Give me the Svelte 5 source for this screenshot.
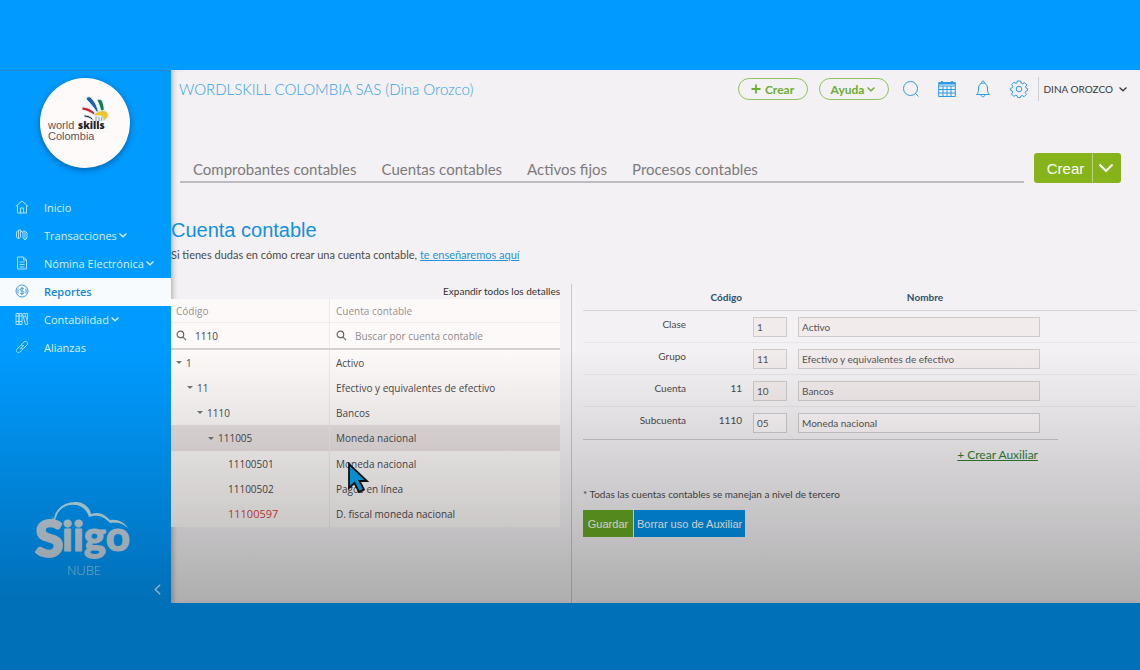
<script lang="ts">
    const menu = [
        { label: 'Inicio', icon: 'home', arrow: false },
        { label: 'Transacciones', icon: 'swap', arrow: true },
        { label: 'Nómina Electrónica', icon: 'doc', arrow: true },
        { label: 'Reportes', icon: 'money', arrow: false },
        { label: 'Contabilidad', icon: 'books', arrow: true },
        { label: 'Alianzas', icon: 'link', arrow: false }
    ];
    let activeMenu = $state('Reportes');

    const tabs = ['Comprobantes contables', 'Cuentas contables', 'Activos fijos', 'Procesos contables'];

    const accounts = [
        { code: '1', name: 'Activo', level: 0, leaf: false },
        { code: '11', name: 'Efectivo y equivalentes de efectivo', level: 1, leaf: false },
        { code: '1110', name: 'Bancos', level: 2, leaf: false },
        { code: '111005', name: 'Moneda nacional', level: 3, leaf: false },
        { code: '11100501', name: 'Moneda nacional', level: 4, leaf: true },
        { code: '11100502', name: 'Pagos en línea', level: 4, leaf: true },
        { code: '11100597', name: 'D. fiscal moneda nacional', level: 4, leaf: true, fiscal: true }
    ];
    let selected = $state('111005');
    let codeFilter = $state('1110');
    let nameFilter = $state('');

    const fields = $state([
        { id: 'clase', label: 'Clase', prefix: '', code: '1', name: 'Activo', locked: true },
        { id: 'grupo', label: 'Grupo', prefix: '', code: '11', name: 'Efectivo y equivalentes de efectivo', locked: true },
        { id: 'cuenta', label: 'Cuenta', prefix: '11', code: '10', name: 'Bancos', locked: true },
        { id: 'subcuenta', label: 'Subcuenta', prefix: '1110', code: '05', name: 'Moneda nacional', locked: false }
    ]);
</script>

{#snippet chevron()}
    <svg class="chevron" viewBox="0 0 10 8"><path d="M1.5 2.5 5 5.8 8.5 2.5" /></svg>
{/snippet}

{#snippet lens()}
    <svg class="lens" viewBox="0 0 12 12"><circle cx="4.8" cy="4.8" r="3.6" /><path d="M7.5 7.5 11 11" /></svg>
{/snippet}

<div class="page">
    <div class="app">
        <aside class="sidebar">
            <div class="brand">
                <svg viewBox="0 0 90 90" role="img" aria-label="worldskills Colombia">
                    <path d="M46 21c1-3 5-3 6 0 4 4 6 9 7 17-4-7-7-11-13-17z" fill="#1d5fa8" />
                    <path d="M57 22c2-2 6 0 6 3 2 5 1 10-1 15-1-7-2-12-5-18z" fill="#1b7f4d" />
                    <path d="M42 29c7 0 13 4 16 11-5-4-9-7-16-8z" fill="#d3222a" />
                    <path d="M54 36c5-4 13-5 14 0 1 3-2 6-6 7 3-4 0-6-8-5z" fill="#efc534" />
                    <path d="M44 37c5 0 8 2 10 6-3-2-6-4-10-4z" fill="#231f20" />
                    <path d="M56 39v4M59 39v4M62 39l-1 4" stroke="#7497b5" />
                    <text x="8" y="51" class="world">world</text>
                    <text x="38" y="51" class="skills">skills</text>
                    <text x="8" y="62" class="colombia">Colombia</text>
                </svg>
            </div>
            <nav>
                {#each menu as item}
                    <a href="#{item.icon}" class:active={activeMenu === item.label} onclick={() => (activeMenu = item.label)}>
                        <svg class="menu-icon" viewBox="0 0 14 14">
                            {#if item.icon === 'home'}
                                <path d="M.8 6.500 7 1l6.200 5.500M2.500 5.500V13h9V5.500M5.500 13V8h3v5" />
                            {:else if item.icon === 'swap'}
                                <path d="M3.500 11V2L1.500 4M3.500 2h2v7l-2 2-2-2V4M8 3h2l2 2v5l-2 2-2-2zM10 3v9M6 3l2 2" />
                            {:else if item.icon === 'doc'}
                                <path d="M2.500 1h6l3 3v9h-9zM8.500 1v3h3M4.500 6h5M4.500 8.500h5M4.500 11h5" />
                            {:else if item.icon === 'money'}
                                <circle cx="7" cy="7" r="6" />
                                <path d="M9 5c-.5-1-3.800-1.200-3.800.5S9 6.800 9 8.600 5.500 10.200 5 9M7 3v8M3 4.500v5M11 4.500v5" />
                            {:else if item.icon === 'books'}
                                <path d="M1 1.500h3v11H1zM4 1.500h3v11H4zM7.500 2l2.500-.5 3 10.500-2.500.6zM1 9.500h6M1 4h6M8 5l3-.8M10.500 1.500h2v6" />
                            {:else}
                                <path d="m5 9 4-4M6 5l3-3c2-2 5 1 3 3L9 8c-.8.800-2 .8-2.800.2M8 9l-3 3c-2 2-5-1-3-3l3-3c.8-.8 2-.8 2.800-.2" />
                            {/if}
                        </svg>
                        <span>{item.label}</span>
                        {#if item.arrow}{@render chevron()}{/if}
                    </a>
                {/each}
            </nav>
            <div class="siigo">
                <svg viewBox="0 0 98 80" role="img" aria-label="Siigo Nube">
                    <path d="M19 20C21 1 52-4 56 15c9-3 14 1 19 6 8-1 14 2 18 8-6-5-10-6-18-5-6-6-11-9-21-6C49 0 24 3 21 19l-2 3-3-5z" />
                    <text x="0" y="58" class="big-s">S</text>
                    <text x="27" y="52" class="iigo">iigo</text>
                    <text x="49" y="76" class="nube">NUBE</text>
                </svg>
            </div>
            <button class="collapse" aria-label="Contraer menú">
                <svg viewBox="0 0 8 14"><path d="M7 1.500 1.500 7 7 12.500" /></svg>
            </button>
        </aside>

        <main>
            <header class="topbar">
                <span class="company">WORDLSKILL COLOMBIA SAS (Dina Orozco)</span>
                <div class="actions">
                    <button class="pill">
                        <svg class="plus" viewBox="0 0 10 10"><path d="M5 .5v9M.5 5h9" /></svg>
                        Crear
                    </button>
                    <button class="pill">Ayuda {@render chevron()}</button>
                </div>
                <div class="tools">
                    <button aria-label="Buscar">
                        <svg viewBox="0 0 18 18"><circle cx="8.500" cy="8.500" r="7" /><path d="m13.500 13.500 3 3" /></svg>
                    </button>
                    <button aria-label="Calendario">
                        <svg viewBox="0 0 18 18"><path d="M.7 2.500h16.600v14H.7zM.7 6h16.600M.7 9.500h16.600M.7 13h16.600M5 6v10.500M9 6v10.500M13 6v10.500" /><path d="M4 1v2.500M14 1v2.500M1 3.500h16" stroke-width="1.800" /></svg>
                    </button>
                    <button aria-label="Notificaciones">
                        <svg viewBox="0 0 18 18"><path d="M2.500 14.500c2-1.500 2-3.500 2-6.500 0-3 2-5 4.500-5s4.500 2 4.500 5c0 3 0 5 2 6.500zM7.500 3c0-2.500 3-2.500 3 0M7 14.500c0 3 4 3 4 0" /></svg>
                    </button>
                    <button aria-label="Configuración">
                        <svg viewBox="0 0 18 18">
                            <path d="M7.300 1h3.400l.5 2.200 1.300.6 2-1.200 2.300 2.300-1.200 2 .5 1.300 1.500.4v1.900l-1.900.7-.5 1.200 1.200 2-2.300 2.300-2-1.200-1.200.5-.6 1.500H7.600L7 15.700l-1.200-.5-2 1.200-2.300-2.300 1.200-2-.5-1.200-1.500-.4V8.300l1.700-.5.500-1.300-1.200-2L4 2.200l2 1.200.8-.3z" />
                            <circle cx="9" cy="9" r="2.800" />
                        </svg>
                    </button>
                </div>
                <button class="user">DINA OROZCO {@render chevron()}</button>
            </header>

            <div class="tabbar">
                <nav class="tabs">
                    {#each tabs as tab}
                        <a href="#tab">{tab}</a>
                    {/each}
                </nav>
                <div class="split">
                    <button>Crear</button>
                    <button class="more" aria-label="Más opciones">
                        <svg viewBox="0 0 16 10"><path d="m1.500 1.500 6.500 6.500 6.500-6.500" /></svg>
                    </button>
                </div>
            </div>

            <h1>Cuenta contable</h1>
            <p class="help">Si tienes dudas en cómo crear una cuenta contable, <a href="#ayuda">te enseñaremos aquí</a></p>

            <div class="columns">
                <section class="tree">
                    <button class="expand">Expandir todos los detalles</button>
                    <table>
                        <thead>
                            <tr>
                                <th class="code">Código</th>
                                <th>Cuenta contable</th>
                            </tr>
                            <tr class="search">
                                <td>
                                    <label>{@render lens()}<input aria-label="Buscar por código" bind:value={codeFilter} /></label>
                                </td>
                                <td>
                                    <label>{@render lens()}<input aria-label="Buscar por cuenta contable" placeholder="Buscar por cuenta contable" bind:value={nameFilter} /></label>
                                </td>
                            </tr>
                        </thead>
                        <tbody>
                            {#each accounts as account}
                                <tr class:selected={selected === account.code} onclick={() => (selected = account.code)}>
                                    <td>
                                        <div class="node level-{account.level}">
                                            <span class="caret" class:leaf={account.leaf}></span>
                                            <span class:fiscal={account.fiscal}>{account.code}</span>
                                        </div>
                                    </td>
                                    <td>{account.name}</td>
                                </tr>
                            {/each}
                        </tbody>
                    </table>
                </section>

                <form class="detail" onsubmit={(e) => e.preventDefault()}>
                    <div class="row head">
                        <span class="head-code">Código</span>
                        <span class="head-name">Nombre</span>
                    </div>
                    {#each fields as field}
                        <div class="row">
                            <label for={field.id}>{field.label}</label>
                            <span class="prefix">{field.prefix}</span>
                            <input id={field.id} bind:value={field.code} readonly={field.locked} />
                            <input aria-label="Nombre {field.label}" bind:value={field.name} readonly={field.locked} />
                        </div>
                    {/each}
                    <div class="aux"><a href="#auxiliar">+ Crear Auxiliar</a></div>
                    <p class="note">* Todas las cuentas contables se manejan a nivel de tercero</p>
                    <div class="buttons">
                        <button class="save">Guardar</button>
                        <button type="button" class="clear">Borrar uso de Auxiliar</button>
                    </div>
                </form>
            </div>
        </main>
    </div>

    <svg class="pointer" viewBox="0 0 22 32">
        <path d="M2 2v24l5.500-5 4.500 9 5-2.500-4.500-8.500H20z" />
    </svg>
</div>

<style>
    :global(body) {
        margin: 0;
    }

    .page {
        position: relative;
        display: flex;
        box-sizing: border-box;
        min-height: 100vh;
        padding: 70px 0 67px;
        background: #009bff;
        color: #4c4a4b;
        font-family: Lato, "Open Sans", sans-serif;
        font-size: 11px;
    }

    /* shade that darkens the lower part of the screen */
    .page::after {
        content: '';
        position: absolute;
        inset: 0;
        background: linear-gradient(transparent 350px, rgba(0, 0, 0, 0.28) 600px);
        pointer-events: none;
    }

    .app {
        display: flex;
        flex: 1;
        min-width: 0;
    }

    button {
        padding: 0;
        border: none;
        background: none;
        font: inherit;
        color: inherit;
        cursor: pointer;
    }

    svg {
        display: block;
        fill: none;
        stroke: currentColor;
    }

    text {
        stroke: none;
    }

    .chevron {
        width: 10px;
        height: 8px;
        stroke-width: 1.3;
    }

    .sidebar {
        display: flex;
        flex-direction: column;
        box-sizing: border-box;
        width: 171px;
        flex-shrink: 0;
        border-top: 1px solid #1f88cf;
        color: #d5f0fb;
        font-family: "Open Sans", sans-serif;
    }

    .brand {
        width: 90px;
        height: 90px;
        margin: 7px auto 26px 40px;
        border-radius: 50%;
        background: #fffafa;
        box-shadow: 0 2px 6px rgba(0, 40, 90, 0.5);
    }

    .world,
    .skills,
    .colombia {
        font-family: "Liberation Sans", sans-serif;
        font-size: 11px;
        fill: #5d5659;
    }

    .skills {
        font-family: "Open Sans", sans-serif;
        font-size: 10px;
        font-weight: 800;
        fill: #231f20;
    }

    .sidebar nav a {
        display: flex;
        align-items: center;
        box-sizing: border-box;
        height: 28px;
        padding: 0 0 2px 15px;
        color: inherit;
        text-decoration: none;
    }

    .sidebar nav a.active {
        background: #f7fbfd;
        color: #1088d8;
        font-weight: 600;
    }

    .menu-icon {
        width: 14px;
        height: 14px;
        margin-right: 15px;
        opacity: 0.8;
    }

    .sidebar .chevron {
        margin-left: 1px;
    }

    .siigo {
        width: 98px;
        margin: auto auto 0 35px;
        color: #c9d8e3;
    }

    .siigo path {
        fill: #bfe6ee;
        stroke: none;
    }

    .siigo text {
        font-family: Lato, sans-serif;
        font-weight: 900;
        fill: currentColor;
        stroke: currentColor;
        stroke-linejoin: round;
    }

    .siigo .big-s {
        font-size: 52px;
        stroke-width: 2;
    }

    .siigo .iigo {
        font-size: 42px;
    }

    .siigo .nube {
        font-family: "Open Sans", sans-serif;
        font-size: 13px;
        font-weight: 300;
        fill: #a5dcec;
        stroke: none;
        text-anchor: middle;
    }

    .collapse {
        align-self: flex-end;
        margin: 4px 10px 7px 0;
    }

    .collapse svg {
        width: 7px;
        height: 13px;
        stroke-width: 1.6;
    }

    main {
        display: flex;
        flex: 1;
        flex-direction: column;
        min-width: 0;
        background: #f3f1f3;
        box-shadow: inset 5px 0 5px -3px rgba(0, 0, 0, 0.25);
    }

    .topbar {
        display: flex;
        align-items: center;
        height: 38px;
        padding: 0 12px 0 8px;
    }

    .company {
        flex: 1;
        color: #35a3e6;
        font-size: 15px;
        font-weight: 300;
        line-height: 36px;
        white-space: nowrap;
    }

    .actions,
    .tools {
        display: flex;
        align-items: center;
    }

    .actions {
        gap: 11px;
    }

    .pill {
        display: flex;
        align-items: center;
        justify-content: center;
        gap: 4px;
        box-sizing: border-box;
        width: 70px;
        height: 22px;
        border: 1px solid #8fc35f;
        border-radius: 11px;
        color: #6cad33;
        font-size: 12px;
        font-weight: 700;
    }

    .pill .chevron {
        margin-left: -2px;
    }

    .plus {
        width: 10px;
        height: 10px;
        stroke-width: 1.8;
    }

    .tools {
        gap: 18px;
        margin: 0 10px 0 13px;
        color: #2e9ae6;
    }

    .tools svg {
        width: 18px;
        height: 18px;
    }

    .user {
        display: flex;
        align-items: center;
        gap: 5px;
        height: 24px;
        padding-left: 5px;
        border-left: 1px solid #cfcdd0;
        color: #3a3a3c;
        font-size: 10px;
        white-space: nowrap;
    }

    .tabbar {
        display: flex;
        align-items: flex-end;
        gap: 10px;
        margin-top: 45px;
        padding: 0 19px 0 9px;
    }

    .tabs {
        display: flex;
        flex: 1;
        gap: 25px;
        height: 28px;
        padding-left: 13px;
        border-bottom: 2px solid #bdbbbd;
    }

    .tabs a {
        color: #7d7b7d;
        font-size: 15px;
        line-height: 32px;
        text-decoration: none;
        white-space: nowrap;
    }

    .split {
        display: flex;
        height: 30px;
        border-radius: 3px;
        background: #86b31a;
        color: #fff;
        font-family: "Liberation Sans", sans-serif;
        font-size: 15px;
    }

    .split button {
        width: 58px;
        padding-left: 5px;
    }

    .split .more {
        width: 29px;
        border-left: 1px solid #bcd47c;
    }

    .split svg {
        width: 16px;
        height: 10px;
        stroke-width: 2;
    }

    h1 {
        margin: 35px 0 0;
        color: #1490df;
        font-family: "Liberation Sans", sans-serif;
        font-size: 20px;
        font-weight: 400;
        line-height: 24px;
    }

    .help {
        margin: 5px 0 0;
        line-height: 16px;
    }

    .help a {
        color: #2593e0;
    }

    .columns {
        display: flex;
        flex: 1;
        margin-top: 21px;
    }

    .tree {
        flex: 0 1 401px;
        box-sizing: border-box;
        padding-right: 11px;
        border-right: 1px solid #c9c7c9;
    }

    .expand {
        display: block;
        height: 15px;
        margin-left: auto;
        padding-bottom: 2px;
        color: #333;
        font-size: 10px;
        line-height: 12px;
    }

    table {
        width: 100%;
        border-collapse: collapse;
        table-layout: fixed;
        background: #fdf9f9;
        font-family: "Open Sans", "Noto Sans", sans-serif;
        font-size: 10px;
    }

    th,
    td {
        height: 25px;
        padding: 0 6px;
        text-align: left;
        font-weight: 400;
        line-height: 16px;
    }

    th {
        height: 23px;
        color: #969294;
    }

    th.code {
        width: 147px;
    }

    tr > :first-child {
        border-right: 1px solid #eeeaeb;
        padding-left: 5px;
    }

    .search td {
        border-top: 1px solid #f0ebec;
        border-bottom: 2px solid #d5d1d2;
    }

    .search label {
        display: flex;
        align-items: center;
        gap: 8px;
    }

    .lens {
        width: 11px;
        height: 11px;
        flex-shrink: 0;
        color: #666;
        stroke-width: 1.3;
    }

    .search input {
        flex: 1;
        min-width: 0;
        height: 18px;
        padding: 0;
        border: none;
        background: none;
        color: #444;
        font: inherit;
    }

    .search input::placeholder {
        color: #8f8b8d;
        opacity: 1;
    }

    tr.selected {
        background: #e8e1e2;
    }

    tr.selected td,
    tbody tr:last-child td {
        height: 26px;
    }

    .node {
        display: flex;
        align-items: center;
        gap: 4px;
    }

    .level-1 {
        padding-left: 11px;
    }

    .level-2 {
        padding-left: 21px;
    }

    .level-3 {
        padding-left: 32px;
    }

    .level-4 {
        padding-left: 42px;
    }

    .caret {
        border: 3px solid transparent;
        border-top-color: #777;
        border-bottom: none;
    }

    .caret.leaf {
        visibility: hidden;
    }

    .fiscal {
        color: #d8443c;
        font-size: 11px;
    }

    .detail {
        flex: 1;
        min-width: 0;
        padding: 0 3px 65px 11px;
        font-size: 10px;
    }

    .row {
        display: grid;
        grid-template-columns: 103px 45px 34px 1fr;
        gap: 11px;
        box-sizing: border-box;
        height: 32px;
        padding-right: 97px;
        border-bottom: 1px solid #e7e5e7;
        line-height: 26px;
        text-align: right;
    }

    .row.head {
        height: 27px;
        border-color: #d5d3d5;
        color: #2d4f70;
        font-weight: 700;
    }

    .head-code {
        grid-column: 2;
    }

    .head-name {
        grid-column: 4;
        padding-left: 12px;
        text-align: center;
    }

    .row:nth-child(5) {
        height: 33px;
        margin-right: 79px;
        padding-right: 18px;
        border-color: #c9c7c9;
    }

    .row input {
        box-sizing: border-box;
        width: 100%;
        height: 20px;
        margin-top: 6px;
        padding: 0 3px;
        border: 1px solid #cfcbcc;
        border-radius: 0;
        outline: none;
        background: #fbf6f7;
        color: #555;
        font: inherit;
    }

    .row input:read-only {
        background: #f2ebeb;
    }

    .aux {
        padding: 6px 99px 0 0;
        text-align: right;
        font-size: 12px;
        line-height: 18px;
    }

    .aux a {
        color: #2f7d32;
    }

    .note {
        margin: 22px 0 8px;
        line-height: 16px;
    }

    .buttons {
        display: flex;
        gap: 1px;
        font-family: "Liberation Sans", sans-serif;
        font-size: 11px;
        color: #fff;
    }

    .buttons button {
        min-width: 50px;
        height: 27px;
        padding: 0 3px;
    }

    .save {
        background: #67a824;
    }

    .clear {
        background: #0093ec;
    }

    .pointer {
        position: absolute;
        top: 462px;
        left: 347px;
        width: 22px;
        height: 32px;
        fill: #0ba5ee;
        stroke: #111;
        stroke-width: 1.8;
    }
</style>
